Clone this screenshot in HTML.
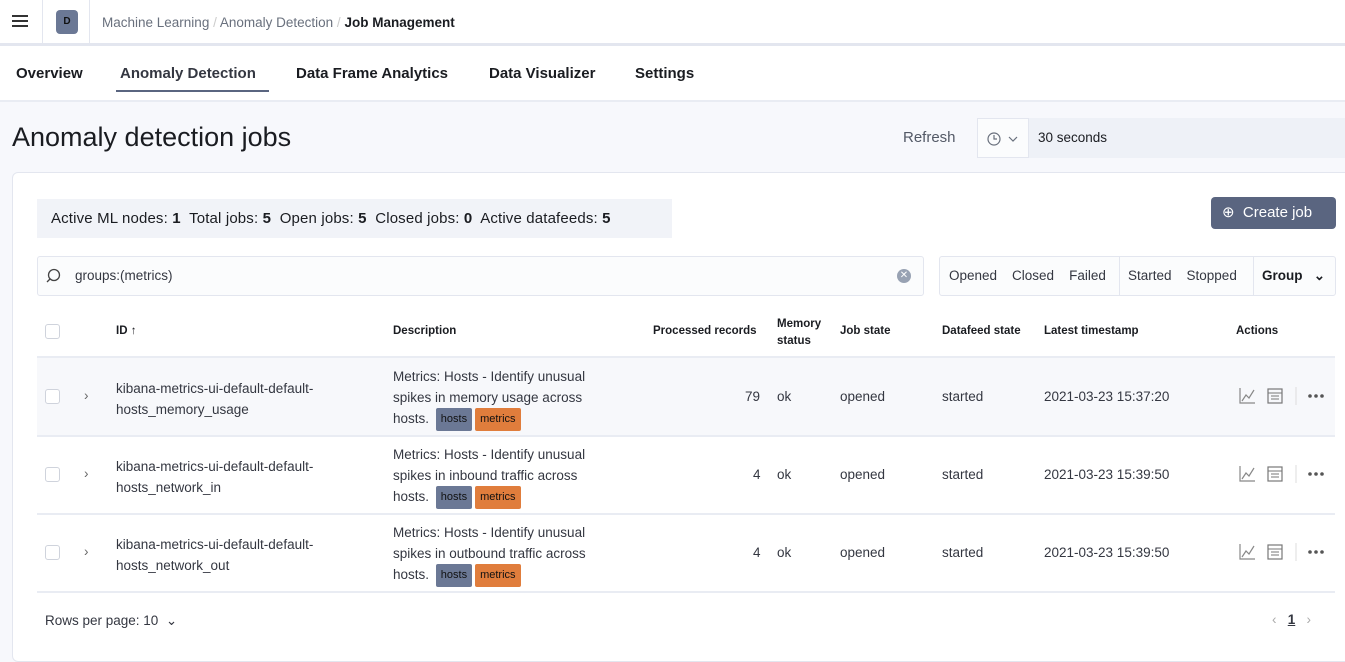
<!DOCTYPE html>
<html><head><style>
*{box-sizing:border-box;margin:0;padding:0}
body{width:1345px;height:648px;overflow:hidden;font-family:"Liberation Sans",sans-serif;background:#f7f8fc;color:#343741;position:relative}
.abs{position:absolute}
.hdr{left:0;top:0;width:1345px;height:46px;background:#fff;border-bottom:3px solid #e3e6ef}
.tabs{left:0;top:46px;width:1345px;height:56px;background:#fff;border-bottom:2px solid #e9ecf3}
.tab{position:absolute;top:19px;font-size:15px;font-weight:bold;color:#1a1c21}
.panel{left:12px;top:172px;width:1345px;height:490px;background:#fff;border:1px solid #e3e6ef;border-radius:6px}
.t{position:absolute;font-size:13.5px;color:#343741;white-space:nowrap}
.th{position:absolute;font-size:11.5px;font-weight:bold;color:#1a1c21}
.cb{position:absolute;width:15px;height:15px;border:1px solid #cfd3dc;border-radius:3px;background:#fff}
.badge{display:inline-block;font-size:11px;padding:1px 5px;border-radius:2px;color:#111;margin-left:3px;vertical-align:1px}
.line{position:absolute;left:37px;width:1298px;height:2px;background:#e9ecf3}
.act{position:absolute;left:1238px}
</style></head><body>
<div class="abs hdr"></div>
<div class="abs" style="left:12px;top:15px;width:16px;height:2px;background:#333;box-shadow:0 5px 0 #333,0 10px 0 #333"></div>
<div class="abs" style="left:42px;top:0;width:1px;height:46px;background:#e3e6ef"></div>
<div class="abs" style="left:56px;top:10px;width:22px;height:24px;background:#6b7895;border-radius:4px;color:#111;font-size:10px;font-weight:bold;text-align:center;line-height:24px">D</div>
<div class="abs" style="left:89px;top:0;width:1px;height:46px;background:#e3e6ef"></div>
<div class="t" style="left:102px;top:15px;color:#69707d">Machine Learning <span style="color:#ccc">/</span> Anomaly Detection <span style="color:#ccc">/</span> <b style="color:#1a1c21">Job Management</b></div>
<div class="abs tabs">
<div class="tab" style="left:16px">Overview</div>
<div class="tab" style="left:120px;color:#343741">Anomaly Detection</div>
<div class="abs" style="left:116px;top:44px;width:153px;height:2px;background:#5a6580"></div>
<div class="tab" style="left:296px">Data Frame Analytics</div>
<div class="tab" style="left:489px">Data Visualizer</div>
<div class="tab" style="left:635px">Settings</div>
</div>
<div class="t" style="left:12px;top:122px;font-size:27px;color:#1a1c21">Anomaly detection jobs</div>
<div class="t" style="left:903px;top:129px;font-size:15px;color:#535966">Refresh</div>
<div class="abs" style="left:977px;top:118px;width:52px;height:40px;background:#fbfcfd;border:1px solid #e3e6ef"><svg width="50" height="38"><circle cx="16" cy="20" r="6" fill="none" stroke="#69707d" stroke-width="1.2"/><path d="M16 16v4h3" fill="none" stroke="#69707d" stroke-width="1.2"/><path d="M31 18l4 4 4-4" fill="none" stroke="#69707d" stroke-width="1.2"/></svg></div>
<div class="abs" style="left:1029px;top:118px;width:320px;height:40px;background:#eef1f7;font-size:13.5px;line-height:40px;padding-left:9px;color:#1a1c21">30 seconds</div>
<div class="abs panel"></div>
<div class="abs" style="left:37px;top:199px;width:635px;height:39px;background:#f1f3f8"></div>
<div class="t" style="left:51px;top:210px;font-size:15px;color:#1a1c21;letter-spacing:0.15px">Active ML nodes: <b>1</b>&nbsp; Total jobs: <b>5</b>&nbsp; Open jobs: <b>5</b>&nbsp; Closed jobs: <b>0</b>&nbsp; Active datafeeds: <b>5</b></div>
<div class="abs" style="left:1211px;top:197px;width:125px;height:32px;background:#5a6580;border-radius:4px;color:#fff;font-size:15px;line-height:32px;padding-left:11px">⊕&nbsp; Create job</div>
<div class="abs" style="left:37px;top:256px;width:887px;height:40px;background:#fbfcfd;border:1px solid #e3e6ef;border-radius:3px"></div>
<svg class="abs" style="left:46px;top:267px" width="18" height="18"><circle cx="8" cy="8" r="5.5" fill="none" stroke="#444" stroke-width="1.3"/><path d="M4 12l-3 3" stroke="#444" stroke-width="1.3"/></svg>
<div class="t" style="left:75px;top:268px">groups:(metrics)</div>
<div class="abs" style="left:897px;top:269px;width:14px;height:14px;border-radius:50%;background:#98a2b3;color:#fff;font-size:10px;text-align:center;line-height:14px">✕</div>
<div class="abs" style="left:939px;top:256px;width:397px;height:40px;background:#fbfcfd;border:1px solid #e3e6ef;border-radius:3px"></div>
<div class="abs" style="left:1119px;top:257px;width:1px;height:38px;background:#e3e6ef"></div>
<div class="abs" style="left:1253px;top:257px;width:1px;height:38px;background:#e3e6ef"></div>
<div class="t" style="left:949px;top:268px;color:#343741">Opened&nbsp;&nbsp;&nbsp; Closed&nbsp;&nbsp;&nbsp; Failed</div>
<div class="t" style="left:1128px;top:268px">Started&nbsp;&nbsp;&nbsp; Stopped</div>
<div class="t" style="left:1262px;top:268px;font-weight:bold;color:#1a1c21">Group&nbsp;&nbsp; ⌄</div>

<div class="cb" style="left:45px;top:324px"></div>
<div class="th" style="left:116px;top:325px">ID ↑</div>
<div class="th" style="left:393px;top:325px">Description</div>
<div class="th" style="left:653px;top:325px">Processed records</div>
<div class="th" style="left:777px;top:316px;line-height:17px">Memory<br>status</div>
<div class="th" style="left:840px;top:325px">Job state</div>
<div class="th" style="left:942px;top:325px">Datafeed state</div>
<div class="th" style="left:1044px;top:325px">Latest timestamp</div>
<div class="th" style="left:1236px;top:325px">Actions</div>
<div class="abs" style="left:37px;top:357px;width:1298px;height:79px;background:#f7f8fb"></div>
<div class="line" style="top:356px"></div>
<div class="line" style="top:435px"></div>
<div class="line" style="top:513px"></div>
<div class="line" style="top:591px"></div>

<div class="cb" style="left:45px;top:389px"></div><div class="t" style="left:84px;top:388px;color:#666">›</div>
<div class="t" style="left:116px;top:378px;line-height:21px">kibana-metrics-ui-default-default-<br>hosts_memory_usage</div>
<div class="t" style="left:393px;top:367px;line-height:20.5px">Metrics: Hosts - Identify unusual<br>spikes in memory usage across<br>hosts. <span class="badge" style="background:#6b7895">hosts</span><span class="badge" style="background:#e07d3c">metrics</span></div>
<div class="t" style="left:745px;top:389px">79</div><div class="t" style="left:777px;top:389px">ok</div><div class="t" style="left:840px;top:389px">opened</div><div class="t" style="left:942px;top:389px">started</div><div class="t" style="left:1044px;top:389px">2021-03-23 15:37:20</div>
<svg class="act" style="top:386px" width="90" height="20"><path d="M2 2v15h15" fill="none" stroke="#888" stroke-width="1.2"/><path d="M4 15l4-6 3 3 5-8" fill="none" stroke="#888" stroke-width="1.2"/><rect x="30" y="3" width="14" height="14" fill="none" stroke="#777" stroke-width="1.2"/><path d="M30 7h14M33 10h8M33 13h8" stroke="#777" stroke-width="1"/><path d="M58 1v18" stroke="#ddd"/><circle cx="72" cy="10" r="1.8" fill="#555"/><circle cx="78" cy="10" r="1.8" fill="#555"/><circle cx="84" cy="10" r="1.8" fill="#555"/></svg>

<div class="cb" style="left:45px;top:467px"></div><div class="t" style="left:84px;top:466px;color:#666">›</div>
<div class="t" style="left:116px;top:456px;line-height:21px">kibana-metrics-ui-default-default-<br>hosts_network_in</div>
<div class="t" style="left:393px;top:445px;line-height:20.5px">Metrics: Hosts - Identify unusual<br>spikes in inbound traffic across<br>hosts. <span class="badge" style="background:#6b7895">hosts</span><span class="badge" style="background:#e07d3c">metrics</span></div>
<div class="t" style="left:753px;top:467px">4</div><div class="t" style="left:777px;top:467px">ok</div><div class="t" style="left:840px;top:467px">opened</div><div class="t" style="left:942px;top:467px">started</div><div class="t" style="left:1044px;top:467px">2021-03-23 15:39:50</div>
<svg class="act" style="top:464px" width="90" height="20"><path d="M2 2v15h15" fill="none" stroke="#888" stroke-width="1.2"/><path d="M4 15l4-6 3 3 5-8" fill="none" stroke="#888" stroke-width="1.2"/><rect x="30" y="3" width="14" height="14" fill="none" stroke="#777" stroke-width="1.2"/><path d="M30 7h14M33 10h8M33 13h8" stroke="#777" stroke-width="1"/><path d="M58 1v18" stroke="#ddd"/><circle cx="72" cy="10" r="1.8" fill="#555"/><circle cx="78" cy="10" r="1.8" fill="#555"/><circle cx="84" cy="10" r="1.8" fill="#555"/></svg>

<div class="cb" style="left:45px;top:545px"></div><div class="t" style="left:84px;top:544px;color:#666">›</div>
<div class="t" style="left:116px;top:534px;line-height:21px">kibana-metrics-ui-default-default-<br>hosts_network_out</div>
<div class="t" style="left:393px;top:523px;line-height:20.5px">Metrics: Hosts - Identify unusual<br>spikes in outbound traffic across<br>hosts. <span class="badge" style="background:#6b7895">hosts</span><span class="badge" style="background:#e07d3c">metrics</span></div>
<div class="t" style="left:753px;top:545px">4</div><div class="t" style="left:777px;top:545px">ok</div><div class="t" style="left:840px;top:545px">opened</div><div class="t" style="left:942px;top:545px">started</div><div class="t" style="left:1044px;top:545px">2021-03-23 15:39:50</div>
<svg class="act" style="top:542px" width="90" height="20"><path d="M2 2v15h15" fill="none" stroke="#888" stroke-width="1.2"/><path d="M4 15l4-6 3 3 5-8" fill="none" stroke="#888" stroke-width="1.2"/><rect x="30" y="3" width="14" height="14" fill="none" stroke="#777" stroke-width="1.2"/><path d="M30 7h14M33 10h8M33 13h8" stroke="#777" stroke-width="1"/><path d="M58 1v18" stroke="#ddd"/><circle cx="72" cy="10" r="1.8" fill="#555"/><circle cx="78" cy="10" r="1.8" fill="#555"/><circle cx="84" cy="10" r="1.8" fill="#555"/></svg>

<div class="t" style="left:45px;top:613px">Rows per page: 10 &nbsp;⌄</div>
<div class="t" style="left:1272px;top:612px;color:#aaa">‹ &nbsp;&nbsp;<b style="color:#343741;text-decoration:underline">1</b>&nbsp;&nbsp; ›</div>
</body></html>
